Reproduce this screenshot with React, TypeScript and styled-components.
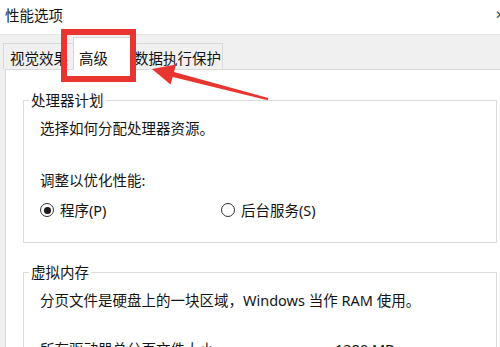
import React from "react";
import styled, { createGlobalStyle } from "styled-components";

const Global = createGlobalStyle`
  html, body { margin: 0; padding: 0; background: #ffffff; }
  body {
    width: 500px;
    height: 347px;
    overflow: hidden;
    font-family: "Noto Sans", "Noto Sans CJK SC", sans-serif;
    font-size: 14.5px;
    line-height: 20px;
    color: #141414;
  }
  #root { position: relative; width: 500px; height: 347px; overflow: hidden; }
`;

const Window = styled.div`
  display: flex;
  flex-direction: column;
  width: 500px;
  height: 347px;
  overflow: hidden;
`;

const TitleBar = styled.div`
  flex-shrink: 0;
  display: flex;
  justify-content: space-between;
  align-items: flex-start;
  height: 34px;
  box-sizing: border-box;
  padding: 5px 0 0 5px;
  background: #ffffff;
`;

const Title = styled.div`
  line-height: 20px;
`;

const Close = styled.div`
  font-family: "DejaVu Sans", sans-serif;
  font-size: 12px;
  line-height: 14px;
  margin: 3px -5px 0 0;
  color: #444;
`;

const Body = styled.div`
  flex: 1 0 auto;
  display: flex;
  flex-direction: column;
  background: #f0f0f0;
  border-top: 1px solid #e6e6e6;
  padding: 2px 0 0 5px;
`;

const TabRow = styled.div`
  flex-shrink: 0;
  display: flex;
  align-items: flex-end;
  margin-left: -2px;
`;

const Tab = styled.div<{ $w: number; $pl: number; $selected?: boolean }>`
  position: relative;
  flex-shrink: 0;
  box-sizing: border-box;
  width: ${(p) => p.$w}px;
  padding-left: ${(p) => p.$pl}px;
  border: 1px solid #d9d9d9;
  border-bottom: none;
  white-space: nowrap;
  overflow: hidden;
  line-height: 20px;
  ${(p) =>
    p.$selected
      ? `
    height: 33px;
    padding-top: 10px;
    margin: 0 -2px -1px -2px;
    background: #ffffff;
    z-index: 2;
  `
      : `
    height: 26px;
    padding-top: 4px;
    background: #f0f0f0;
    z-index: 1;
  `}
`;

const Page = styled.div`
  flex: 1 0 auto;
  background: #ffffff;
  border: 1px solid #d9d9d9;
  margin-right: -15px;
  padding: 20px 17px 0 17px;
`;

const Group = styled.fieldset<{ $mt?: number; $pb?: number }>`
  margin: ${(p) => p.$mt ?? 0}px 0 0 0;
  padding: 0 0 ${(p) => p.$pb ?? 0}px 0;
  border: 1px solid #dcdcdc;
  min-width: 0;
`;

const Legend = styled.legend`
  margin-left: 5px;
  padding: 0 2px;
  line-height: 20px;
`;

const Content = styled.div`
  padding: 0 16px;
`;

const Line = styled.div<{ $mt: number }>`
  margin-top: ${(p) => p.$mt}px;
  line-height: 20px;
  white-space: nowrap;
`;

const RadioRow = styled.div`
  display: grid;
  grid-template-columns: 181px auto;
  margin-top: 10px;
`;

const RadioLabel = styled.label`
  display: flex;
  align-items: center;
  gap: 6px;
  line-height: 20px;
`;

const RadioCircle = styled.span<{ $checked?: boolean }>`
  display: inline-flex;
  align-items: center;
  justify-content: center;
  width: 14px;
  height: 14px;
  box-sizing: border-box;
  border: 1px solid #333333;
  border-radius: 50%;
  background: #ffffff;
  &::after {
    content: "";
    display: ${(p) => (p.$checked ? "block" : "none")};
    width: 7px;
    height: 7px;
    border-radius: 50%;
    background: #1a1a1a;
  }
`;

const ValueRow = styled.div`
  display: grid;
  grid-template-columns: 295px auto;
  margin-top: 29px;
  line-height: 20px;
  white-space: nowrap;
`;

const HighlightBox = styled.div`
  position: absolute;
  left: 61px;
  top: 29px;
  width: 75px;
  height: 53px;
  box-sizing: border-box;
  border: 6px solid #e8352f;
  z-index: 10;
  pointer-events: none;
`;

const ArrowLayer = styled.svg`
  position: absolute;
  left: 0;
  top: 0;
  width: 500px;
  height: 347px;
  z-index: 11;
  pointer-events: none;
`;

export default function App() {
  return (
    <>
      <Global />
      <Window>
        <TitleBar>
          <Title>性能选项</Title>
          <Close>✕</Close>
        </TitleBar>
        <Body>
          <TabRow>
            <Tab $w={72} $pl={6}>视觉效果</Tab>
            <Tab $w={59} $pl={5} $selected>高级</Tab>
            <Tab $w={93} $pl={3}>数据执行保护</Tab>
          </TabRow>
          <Page>
            <Group $pb={22}>
              <Legend>处理器计划</Legend>
              <Content>
                <Line $mt={8}>选择如何分配处理器资源。</Line>
                <Line $mt={32}>调整以优化性能:</Line>
                <RadioRow>
                  <RadioLabel>
                    <RadioCircle $checked />
                    程序(P)
                  </RadioLabel>
                  <RadioLabel>
                    <RadioCircle />
                    后台服务(S)
                  </RadioLabel>
                </RadioRow>
              </Content>
            </Group>
            <Group $mt={19} $pb={20}>
              <Legend>虚拟内存</Legend>
              <Content>
                <Line $mt={8}>分页文件是硬盘上的一块区域，Windows 当作 RAM 使用。</Line>
                <ValueRow>
                  <span>所有驱动器总分页文件大小:</span>
                  <span>1280 MB</span>
                </ValueRow>
              </Content>
            </Group>
          </Page>
        </Body>
      </Window>
      <HighlightBox />
      <ArrowLayer viewBox="0 0 500 347">
        <polygon
          points="152,69 176,64.5 174,72 268.3,98 267.7,100.2 172.7,77 170.5,84.5"
          fill="#e8352f"
        />
      </ArrowLayer>
    </>
  );
}
